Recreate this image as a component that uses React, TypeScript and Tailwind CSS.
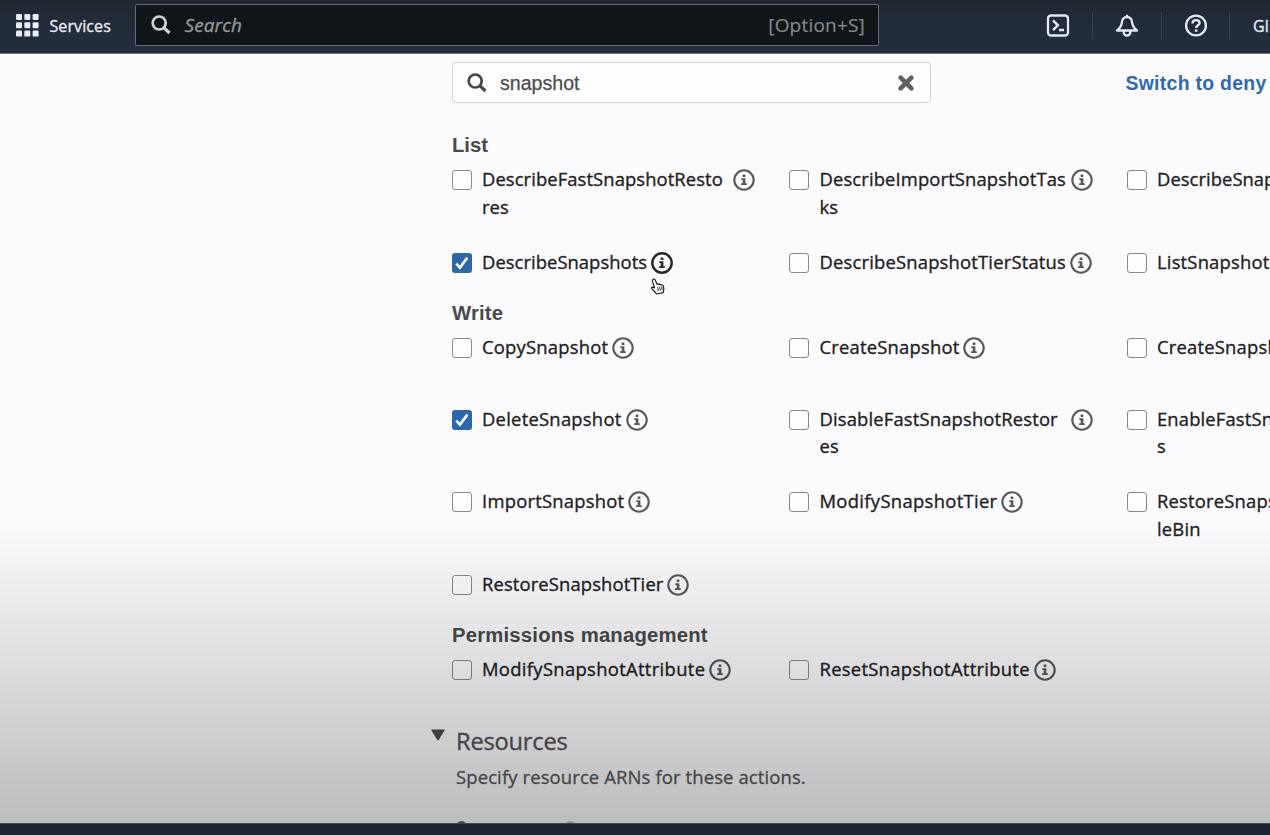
type Action = {
  lines: string[];
  tracking?: string;
  checked?: boolean;
  active?: boolean;
  iconHidden?: boolean;
};

type Row = { height: string; actions: Action[] };

const listRows: Row[] = [
  {
    height: 'h-[82.5px]',
    actions: [
      { lines: ['DescribeFastSnapshotResto', 'res'], tracking: 'tracking-[0.09px]' },
      { lines: ['DescribeImportSnapshotTas', 'ks'], tracking: 'tracking-[0.13px]' },
      { lines: ['DescribeSnap'], tracking: 'tracking-[0.05px]', iconHidden: true },
    ],
  },
  {
    height: 'h-[52px]',
    actions: [
      { lines: ['DescribeSnapshots'], tracking: 'tracking-[0.05px]', checked: true, active: true },
      { lines: ['DescribeSnapshotTierStatus'], tracking: 'tracking-[0.19px]' },
      { lines: ['ListSnapshot'], tracking: 'tracking-[0.2px]', iconHidden: true },
    ],
  },
];

const writeRows: Row[] = [
  {
    height: 'h-[72px]',
    actions: [
      { lines: ['CopySnapshot'], tracking: 'tracking-[0.23px]' },
      { lines: ['CreateSnapshot'], tracking: 'tracking-[0.21px]' },
      { lines: ['CreateSnapsh'], tracking: 'tracking-[0.21px]', iconHidden: true },
    ],
  },
  {
    height: 'h-[82.5px]',
    actions: [
      { lines: ['DeleteSnapshot'], tracking: 'tracking-[0.25px]', checked: true },
      { lines: ['DisableFastSnapshotRestor', 'es'], tracking: 'tracking-[0.16px]' },
      { lines: ['EnableFastSn', 's'], tracking: 'tracking-[0.15px]', iconHidden: true },
    ],
  },
  {
    height: 'h-[82.5px]',
    actions: [
      { lines: ['ImportSnapshot'], tracking: 'tracking-[0.24px]' },
      { lines: ['ModifySnapshotTier'], tracking: 'tracking-[0.33px]' },
      { lines: ['RestoreSnaps', 'leBin'], tracking: 'tracking-[0.2px]', iconHidden: true },
    ],
  },
  {
    height: 'h-[52px]',
    actions: [{ lines: ['RestoreSnapshotTier'], tracking: 'tracking-[0.13px]' }],
  },
];

const permissionRows: Row[] = [
  {
    height: 'h-[72px]',
    actions: [
      { lines: ['ModifySnapshotAttribute'], tracking: 'tracking-[0.33px]' },
      { lines: ['ResetSnapshotAttribute'], tracking: 'tracking-[0.28px]' },
    ],
  },
];

function InfoIcon({ active }: { active?: boolean }) {
  return (
    <svg viewBox="0 0 22 22" className={`size-[22px] ${active ? 'text-[#26282b]' : 'text-[#56585b]'}`}>
      <circle cx="11" cy="11" r="9.7" fill="none" stroke="currentColor" strokeWidth={active ? 2.4 : 2.1} />
      <rect x="9.6" y="5.5" width="2.8" height="2.4" rx="0.5" fill="currentColor" />
      <path d="M8.3 9.3h4.1v4.9h1.4V16H8.1v-1.8h1.6v-3.100H8.3z" fill="currentColor" />
    </svg>
  );
}

function Checkbox({ checked }: { checked?: boolean }) {
  return checked ? (
    <span className="flex size-5 shrink-0 items-center justify-center rounded-[3px] bg-[#2b67a9]">
      <svg viewBox="0 0 20 20" className="size-5" fill="none" stroke="#f4f8fd" strokeWidth="2.6">
        <path d="M4.2 10.6l3.7 4L15.4 4.6" />
      </svg>
    </span>
  ) : (
    <span className="size-5 shrink-0 rounded-[3px] border-[1.5px] border-[#88898c] bg-[#fdfdfe]" />
  );
}

function ActionItem({ lines, tracking = '', checked, active, iconHidden }: Action) {
  const wraps = lines.length > 1;
  return (
    <div className="flex items-start">
      <div className="mt-[5px] mr-[10.5px] -ml-px flex pl-[0.5px]">
        <Checkbox checked={checked} />
      </div>
      <div
        className={`text-[18.4px] leading-[27.5px] whitespace-nowrap text-[#1f2124] [-webkit-text-stroke:0.35px] ${tracking} ${wraps ? 'w-[251px]' : 'pr-[4px]'}`}
      >
        {lines.map((line) => (
          <div key={line}>{line}</div>
        ))}
      </div>
      {!iconHidden && (
        <div className="mt-1 shrink-0">
          <InfoIcon active={active} />
        </div>
      )}
    </div>
  );
}

function Section({ title, tracking, rows }: { title: string; tracking: string; rows: Row[] }) {
  return (
    <section>
      <h3
        className={`mb-[6px] h-[27px] font-['Liberation_Sans',sans-serif] text-[20.3px] leading-[27px] font-bold text-[#48494c] ${tracking}`}
      >
        {title}
      </h3>
      {rows.map((row) => (
        <div key={row.actions[0].lines[0]} className={`grid grid-cols-[337.5px_337.5px_337.5px] ${row.height}`}>
          {row.actions.map((action) => (
            <ActionItem key={action.lines[0]} {...action} />
          ))}
        </div>
      ))}
    </section>
  );
}

function Magnifier({ className }: { className: string }) {
  return (
    <svg viewBox="0 0 20 20" fill="none" stroke="currentColor" className={className}>
      <circle cx="8.2" cy="8" r="6.500" strokeWidth="2.700" />
      <path d="M13 12.800l5.500 5.200" strokeWidth="3.200" />
    </svg>
  );
}

function Header() {
  return (
    <header className="flex h-[54px] shrink-0 items-start overflow-hidden border-b border-[#6f767f] bg-linear-to-b from-[#20272f] via-[#222c39] to-[#252e3d]">
      <div className="flex h-[51px] w-[134.5px] shrink-0 items-center pl-4">
        <svg viewBox="0 0 23 23" className="size-[23px]" fill="#e9edf8">
          {[0, 8.3, 16.6].map((y) => [0, 8.3, 16.6].map((x) => <rect key={`${x}-${y}`} x={x} y={y} width="6" height="6" rx="1.2" />))}
        </svg>
        <span className="ml-[10.5px] text-[16px] tracking-[0.1px] text-[#e6eaf1] [-webkit-text-stroke:0.35px]">Services</span>
      </div>
      <div className="mt-[4px] flex h-[42px] w-[744.5px] shrink-0 items-center rounded-[2px] border-[1.5px] border-[#666c73] bg-[#101519] pr-[13px] pl-[15px]">
        <Magnifier className="size-[20px] text-[#cfd1d4]" />
        <span className="ml-3.5 pt-px text-[19px] tracking-[0.1px] text-[#96999c] italic [-webkit-text-stroke:0.3px]">Search</span>
        <span className="ml-auto pt-px text-[19px] tracking-[0.2px] text-[#85888b] [-webkit-text-stroke:0.2px]">[Option+S]</span>
      </div>
      <div className="flex h-[51px] flex-1 items-center pl-[167px] text-[#e3e8f2]">
        <svg viewBox="0 0 24 24" className="size-6 shrink-0" fill="none" stroke="currentColor" strokeWidth="2.3">
          <rect x="2" y="1.500" width="20" height="20" rx="3" />
          <path d="M7 6.400l4.900 4.900L7 16.200M13 16h5" strokeWidth="2.500" />
        </svg>
        <span className="ml-[21.5px] h-7 w-px shrink-0 bg-[#39414f]" />
        <svg viewBox="0 0 24 24" className="ml-[22px] size-6 shrink-0" fill="none" stroke="currentColor" strokeWidth="2.3" strokeLinejoin="round">
          <path d="M12 .8v2.500" />
          <path d="M12 3.200c-3 0-4.700 1.900-5 4.600-.400 4-1.600 6-5 8.700h20c-3.400-2.700-4.600-4.700-5-8.700-.300-2.700-2-4.600-5-4.600z" />
          <path d="M8.700 17v1.300a3.300 3.300 0 0 0 6.600 0V17" />
        </svg>
        <span className="ml-[22.500px] h-7 w-px shrink-0 bg-[#39414f]" />
        <svg viewBox="0 0 24 24" className="ml-[21.500px] size-6 shrink-0" fill="none" stroke="currentColor" strokeWidth="2.400">
          <circle cx="12" cy="11.500" r="9.900" />
          <path d="M8.500 9.400c0-2 1.400-3.300 3.500-3.300s3.600 1.200 3.600 2.900c0 2.300-3.500 2.300-3.500 5" />
          <path d="M12.100 15.400v2.400" strokeWidth="2.600" />
        </svg>
        <span className="ml-[21.500px] h-7 w-px shrink-0 bg-[#39414f]" />
        <span className="ml-[23px] text-[16px] whitespace-nowrap [-webkit-text-stroke:0.35px]">Gl</span>
      </div>
    </header>
  );
}

function FilterBar() {
  return (
    <div className="mt-2 flex h-[41px] items-center">
      <div className="flex h-full w-[478.5px] shrink-0 items-center rounded-[4px] border-[1.5px] border-[#cfd0d5] bg-[#fdfdfe] pr-[15px] pl-3.5 font-['Liberation_Sans',sans-serif]">
        <Magnifier className="size-[20px] text-[#444649]" />
        <span className="ml-[13px] pt-0.5 text-[19.6px] text-[#4b4d50] [-webkit-text-stroke:0.25px]">snapshot</span>
        <svg viewBox="0 0 18 18" className="ml-auto size-[18px]" stroke="#5f6062" strokeWidth="4.600" strokeLinecap="round">
          <path d="M3.600 3.600l10.800 10.800M14.400 3.600L3.600 14.400" />
        </svg>
      </div>
      <a className="ml-[195px] pt-[3px] font-['Liberation_Sans',sans-serif] text-[19.4px] font-bold tracking-[0.3px] whitespace-nowrap text-[#2d6aac]">
        Switch to deny
      </a>
    </div>
  );
}

function HandCursor() {
  return (
    <svg viewBox="0 0 16 17" className="absolute top-[278px] left-[650px] h-[17px] w-4" strokeLinejoin="round" strokeLinecap="round">
      <path
        d="M3.200 1.400c1-.5 1.700 0 2.100.9l1.600 3.800 1-.2 1 .4 1.200-.1 1 .7 1.300.1c1 .5 1.300 2 1.400 3.400.1 1.800-.5 2.800-.6 4.300l-6.700 1.300C5.500 14.300 4 13 1.900 10.900c-.8-.8-.4-1.900.7-1.800l2 .9L2.400 3.200c-.2-.8.1-1.500.8-1.800z"
        fill="#fff"
        stroke="#222"
        strokeWidth="1.200"
      />
      <path d="M7.700 9.300l.6 3.300M9.700 9l.6 3.300M11.700 8.800l.4 3" stroke="#222" strokeWidth="0.900" />
    </svg>
  );
}

export default function App() {
  return (
    <div className="relative flex h-[835px] w-[1270px] flex-col overflow-hidden bg-[#fbfbfd] font-['Open_Sans','Noto_Sans',sans-serif]">
      <Header />
      <main className="h-[769px] shrink-0 overflow-hidden pl-[452px]">
        <FilterBar />
        <div className="mt-[29.400px]">
          <Section title="List" tracking="tracking-[-0.02px]" rows={listRows} />
          <Section title="Write" tracking="tracking-[0.15px]" rows={writeRows} />
          <Section title="Permissions management" tracking="tracking-[0.2px]" rows={permissionRows} />
        </div>
        <div className="-ml-6 h-[72px] border-b border-[#f0f0f4]/60 pl-[3px]">
          <div className="flex items-start">
            <svg viewBox="0 0 14 12" className="mt-[2.500px] h-3 w-3.5" fill="#4a4b4e">
              <path d="M1 .5h12c.6 0 .8.500.5 1L7.700 11c-.4.600-1 .600-1.400 0L.5 1.500c-.3-.5-.1-1 .5-1z" />
            </svg>
            <div className="ml-[11px]">
              <h2 className="-mt-[1.500px] h-8 text-[23.700px] leading-8 tracking-[-0.23px] text-[#525356] [-webkit-text-stroke:0.35px]">Resources</h2>
              <p className="mt-[5.500px] text-[18.500px] leading-7 tracking-[0.1px] text-[#57585b] [-webkit-text-stroke:0.3px]">
                Specify resource ARNs for these actions.
              </p>
            </div>
          </div>
        </div>
        <div className="mt-[22.500px] flex gap-[98px] pl-1">
          <span className="h-3 w-[11px] rounded-full bg-[#5c5d61]" />
          <span className="h-3 w-[10px] rounded-full bg-[#bdbec2]" />
        </div>
      </main>
      <footer className="flex-1 border-t border-[#3d464f] bg-linear-to-b from-[#1b242d] to-[#1c2232]" />
      <div className="pointer-events-none absolute inset-x-0 top-[515px] h-[308px] bg-linear-to-b from-black/0 from-3% to-black/25" />
      <HandCursor />
    </div>
  );
}
